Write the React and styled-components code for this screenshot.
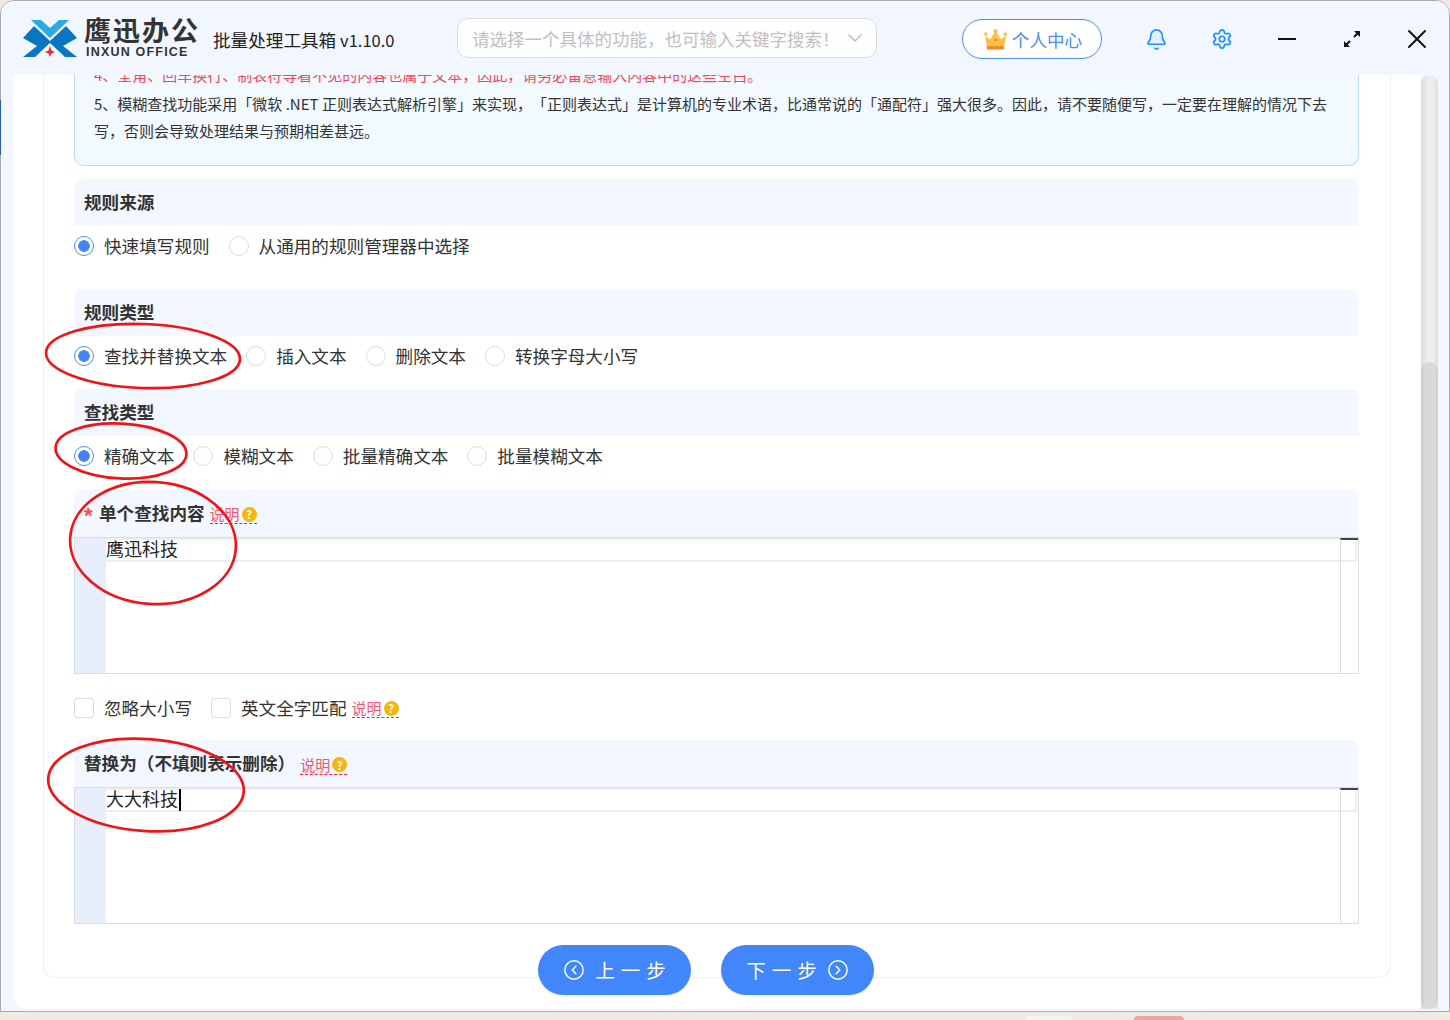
import styled, { createGlobalStyle } from "styled-components";
import { Bell, Settings, ChevronDown, X, CircleChevronLeft, CircleChevronRight } from "lucide-react";

const GlobalStyle = createGlobalStyle`
html, body {
  margin: 0;
  width: 1450px;
  height: 1020px;
  overflow: hidden;
  background: #efebe4;
}
body {
  font-family: "Noto Sans CJK SC", "Noto Sans", sans-serif;
  color: #333;
  text-spacing-trim: space-all;
}
* { box-sizing: border-box; }
`;

const App = () => {
  return (
    <>
      <GlobalStyle />
      <Page>
        <Window>
          <Header>
            <Brand>
              <Logo />
              <BrandText>
                <BrandName>鹰迅办公</BrandName>
                <BrandSub>INXUN OFFICE</BrandSub>
              </BrandText>
              <AppTitle>批量处理工具箱 <Version>v1.10.0</Version></AppTitle>
            </Brand>
            <Search>
              <span>请选择一个具体的功能，也可输入关键字搜索！</span>
              <ChevronDown size={24} color="#bdbdbd" strokeWidth={1.5} />
            </Search>
            <UserButton>
              <Crown />
              个人中心
            </UserButton>
            <IconCell>
              <Bell size={23} color="#1e90ff" fill="#e2f1ff" strokeWidth={1.7} />
            </IconCell>
            <IconCell>
              <Settings size={22} color="#1e90ff" strokeWidth={1.9} />
            </IconCell>
            <IconCell>
              <MinusBar />
            </IconCell>
            <IconCell>
              <ExpandIcon />
            </IconCell>
            <IconCell>
              <X size={32} color="#111" strokeWidth={1.4} />
            </IconCell>
          </Header>
          <Body>
            <Content>
              <Panel>
                <Notice>
                  <NoticeLine $red>4、全角、回车换行、制表符等看不见的内容也属于文本，因此，请务必留意输入内容中的这些空白。</NoticeLine>
                  <NoticeLine>5、模糊查找功能采用「微软 .NET 正则表达式解析引擎」来实现，「正则表达式」是计算机的专业术语，比通常说的「通配符」强大很多。因此，请不要随便写，一定要在理解的情况下去</NoticeLine>
                  <NoticeLine>写，否则会导致处理结果与预期相差甚远。</NoticeLine>
                </Notice>

                <SectionTitle>规则来源</SectionTitle>
                <OptionRow>
                  <Option label="快速填写规则" checked />
                  <Option label="从通用的规则管理器中选择" />
                </OptionRow>

                <SectionTitle $gap={23}>规则类型</SectionTitle>
                <OptionRow>
                  <Option label="查找并替换文本" checked />
                  <Option label="插入文本" />
                  <Option label="删除文本" />
                  <Option label="转换字母大小写" />
                </OptionRow>

                <SectionTitle>查找类型</SectionTitle>
                <OptionRow>
                  <Option label="精确文本" checked />
                  <Option label="模糊文本" />
                  <Option label="批量精确文本" />
                  <Option label="批量模糊文本" />
                </OptionRow>

                <SectionTitle $tall>
                  <Required>*</Required>
                  单个查找内容
                  <Help />
                </SectionTitle>
                <Editor text="鹰迅科技" />

                <CheckRow>
                  <CheckOption>
                    <CheckBox />
                    <LabelText>忽略大小写</LabelText>
                  </CheckOption>
                  <CheckOption>
                    <CheckBox />
                    <LabelText>英文全字匹配</LabelText>
                    <Help />
                  </CheckOption>
                </CheckRow>

                <SectionTitle>
                  替换为（不填则表示删除）
                  <Help />
                </SectionTitle>
                <Editor text="大大科技" caret />
              </Panel>
              <Footer>
                <StepButton>
                  <CircleChevronLeft size={22} strokeWidth={1.6} />
                  <StepText>上一步</StepText>
                </StepButton>
                <StepButton>
                  <StepText>下一步</StepText>
                  <CircleChevronRight size={22} strokeWidth={1.6} />
                </StepButton>
              </Footer>
            </Content>
            <ScrollTrack>
              <ScrollThumb />
            </ScrollTrack>
          </Body>
        </Window>
        <Taskbar>
          <TaskItem />
          <TaskItem $pink />
        </Taskbar>
        <EdgeSliver />
        <Marks viewBox="0 0 1450 1020">
          <ellipse cx="143" cy="356" rx="97" ry="32" transform="rotate(2 143 356)" />
          <ellipse cx="121" cy="451" rx="65.5" ry="27.5" transform="rotate(3 121 451)" />
          <ellipse cx="153" cy="543" rx="83" ry="61" transform="rotate(4 153 543)" />
          <ellipse cx="146" cy="785" rx="98" ry="46" transform="rotate(4 146 785)" />
        </Marks>
      </Page>
    </>
  );
};

const Logo = () => (
  <LogoSvg viewBox="24 18 54 40">
    <polygon fill="#0a76c2" points="24,37 35,25 52,41 36,56 24,56 38,45" />
    <polygon fill="#0a76c2" points="78,37 67,25 50,41 66,56 78,56 64,45" />
    <polygon fill="#29abe2" points="32,19 42,19 51,27 60,19 70,19 51,37" />
    <polygon fill="#e8262d" points="51,45 52.4,49.6 56,51 52.4,52.4 51,56 49.6,52.4 46,51 49.6,49.6" />
  </LogoSvg>
);

const Crown = () => (
  <svg width="23" height="21" viewBox="0 0 23 21">
    <path fill="#fbbf44" d="M1 6.5l5 4 5.500-8.500 5.500 8.500 5-4-1.800 10.500H2.800z" />
    <circle cx="1.800" cy="5" r="1.800" fill="#fbbf44" />
    <circle cx="11.500" cy="2" r="2" fill="#fbbf44" />
    <circle cx="21.200" cy="5" r="1.800" fill="#fbbf44" />
    <rect x="2.800" y="17" width="17.400" height="3.500" rx="0.800" fill="#f28a30" />
    <circle cx="11.500" cy="11" r="0.900" fill="#d9482b" />
  </svg>
);

const ExpandIcon = () => (
  <svg width="18" height="18" viewBox="0 0 18 18" fill="none" stroke="#111" strokeWidth="2">
    <path d="M11 7l4-4M3 15l4-4" />
    <path fill="#111" stroke="none" d="M11 1h6v6zM1 11v6h6z" />
  </svg>
);

const Option = ({ label, checked }) => (
  <OptionItem>
    <Radio $checked={checked} />
    <LabelText>{label}</LabelText>
  </OptionItem>
);

const Help = () => (
  <HelpLink>
    说明
    <HelpDot>?</HelpDot>
  </HelpLink>
);

const Editor = ({ text, caret }) => (
  <EditorBox>
    <Gutter />
    <Code>
      <CodeLine>
        <CodeText>{text}</CodeText>
        {caret && <Caret />}
      </CodeLine>
    </Code>
    <Side />
  </EditorBox>
);

const Page = styled.div`
position: relative;
width: 1450px;
height: 1020px;
overflow: hidden;
`;
const Window = styled.div`
width: 1450px;
height: 1012px;
display: flex;
flex-direction: column;
background: #f2f7ff;
border: 1px solid #a9abb0;
border-radius: 14px 14px 0 0;
overflow: hidden;
`;
const Header = styled.header`
flex: none;
height: 74px;
display: flex;
align-items: center;
padding-left: 22px;
background: #f2f7ff;
`;
const Brand = styled.div`
flex: none;
width: 434px;
display: flex;
align-items: center;
`;
const LogoSvg = styled.svg`
width: 54px;
height: 40px;
margin-top: 1px;
`;
const BrandText = styled.div`
display: flex;
flex-direction: column;
margin-left: 7px;
width: 129px;
`;
const BrandName = styled.div`
font-size: 27px;
font-weight: 700;
line-height: 26px;
color: #333;
letter-spacing: 2px;
`;
const BrandSub = styled.div`
font-family: "Liberation Sans", sans-serif;
font-size: 12.5px;
font-weight: 700;
line-height: 13px;
letter-spacing: 1.2px;
color: #333;
margin: 3px 0 0 2px;
`;
const AppTitle = styled.div`
font-size: 17.6px;
line-height: 24px;
color: #222;
white-space: nowrap;
margin-top: 4px;
`;
const Version = styled.span`
font-size: 16.5px;
`;
const Search = styled.div`
flex: none;
width: 420px;
height: 40px;
margin-right: 85px;
padding: 0 9px 0 14px;
display: flex;
align-items: center;
justify-content: space-between;
border: 1px solid #dcdcdc;
border-radius: 11px;
background: #fdfeff;
color: #c0c0c0;
font-size: 17.5px;
white-space: nowrap;
`;
const UserButton = styled.div`
flex: none;
width: 140px;
height: 40px;
margin-top: 2px;
margin-right: 22px;
padding-left: 2px;
display: flex;
align-items: center;
justify-content: center;
gap: 5px;
border: 1px solid #4a8df8;
border-radius: 20px;
background: #fff;
color: #4a8df8;
font-size: 17.6px;
`;
const IconCell = styled.div`
flex: none;
width: 65px;
height: 40px;
margin-top: 2px;
display: flex;
align-items: center;
justify-content: center;
`;
const MinusBar = styled.div`
width: 18px;
height: 2px;
background: #111;
`;
const Body = styled.div`
flex: 1;
min-height: 0;
display: flex;
padding: 0 10px 2px 12px;
`;
const Content = styled.main`
width: 1408px;
padding: 0 30px 14px;
display: flex;
flex-direction: column;
justify-content: flex-end;
overflow: hidden;
background: #fff;
border-radius: 0 0 0 14px;
`;
const Panel = styled.section`
flex: none;
padding: 0 31px 53px 30px;
border: 1px solid #efefef;
border-top: none;
border-radius: 0 0 12px 12px;
`;
const Notice = styled.div`
padding: 0 19px 21px;
margin-bottom: 13px;
background: #f2f9ff;
border: 1px solid #b9dcf7;
border-top: none;
border-radius: 0 0 10px 10px;
`;
const NoticeLine = styled.div`
font-size: 15px;
line-height: 27px;
white-space: nowrap;
margin-bottom: ${props => (props.$red ? 2 : 0)}px;
color: ${props => (props.$red ? "#f5475b" : "#333")};
`;
const SectionTitle = styled.div`
height: ${props => (props.$tall ? 48 : 47)}px;
margin-top: ${props => (props.$gap === undefined ? 0 : props.$gap)}px;
padding: 0 0 2px 10px;
display: flex;
align-items: center;
font-size: 17.6px;
font-weight: 700;
color: #333;
background: #f3f7ff;
border-radius: 8px 8px 0 0;
`;
const OptionRow = styled.div`
height: 40px;
margin-bottom: 13px;
display: flex;
align-items: center;
gap: 19px;
`;
const OptionItem = styled.label`
display: flex;
align-items: center;
gap: 10px;
font-size: 17.6px;
color: #333;
white-space: nowrap;
`;
const LabelText = styled.span`
padding-bottom: 2px;
`;
const CodeText = styled.span`
padding-bottom: 5px;
`;
const Radio = styled.span`
width: 20px;
height: 20px;
border-radius: 50%;
border: 1px solid ${props => (props.$checked ? "#4a8df8" : "#dcdcdc")};
background: ${props => (props.$checked ? "radial-gradient(circle, #4285f4 0 5.5px, #fff 6px)" : "#fff")};
`;
const Required = styled.span`
font-family: "Liberation Sans", sans-serif;
font-size: 22px;
line-height: 20px;
margin: 8px 5px 0 0;
width: 10px;
color: #f5475b;
font-weight: 700;
`;
const HelpLink = styled.span`
margin-left: 5px;
margin-top: 5px;
height: 19px;
display: inline-flex;
align-items: center;
gap: 2px;
font-size: 15px;
font-weight: 400;
line-height: 18px;
color: #f5566b;
border-bottom: 1px dashed #ff2030;
`;
const HelpDot = styled.span`
width: 15px;
height: 15px;
border-radius: 50%;
display: inline-flex;
align-items: center;
justify-content: center;
background: #f5b50a;
color: #fff;
font-size: 11px;
font-weight: 700;
`;
const EditorBox = styled.div`
height: 137px;
display: flex;
background: #fff;
border: 1px solid #dcdcdc;
`;
const Gutter = styled.div`
flex: none;
width: 31px;
background: #e8effc;
`;
const Code = styled.div`
flex: 1;
min-width: 0;
`;
const CodeLine = styled.div`
height: 24px;
margin-right: -17px;
display: flex;
align-items: center;
font-size: 18px;
color: #222;
border: 2px solid #eeeeee;
border-left: none;
`;
const Caret = styled.span`
width: 2px;
height: 22px;
background: #000;
margin-left: 1px;
`;
const Side = styled.div`
flex: none;
width: 18px;
border-left: 1px solid #dcdcdc;
border-top: 2px solid #444;
`;
const CheckRow = styled.div`
height: 32px;
margin: 18px 0 16px;
display: flex;
align-items: center;
gap: 19px;
`;
const CheckOption = styled.label`
display: flex;
align-items: center;
font-size: 17.6px;
color: #333;
white-space: nowrap;
${HelpLink} {
  margin-top: 1px;
}
`;
const CheckBox = styled.span`
width: 20px;
height: 20px;
margin-right: 10px;
border: 1px solid #dcdcdc;
border-radius: 3px;
background: #fff;
`;
const Footer = styled.div`
flex: none;
position: relative;
margin: -33px 0 0 495px;
display: flex;
gap: 30px;
`;
const StepButton = styled.button`
width: 153px;
height: 50px;
padding: 0;
display: flex;
align-items: center;
justify-content: center;
gap: 10px;
border: none;
border-radius: 25px;
background: #4287f9;
color: #fff;
font-family: inherit;
box-shadow: 0 1px 2px rgba(0, 0, 0, 0.08);
`;
const StepText = styled.span`
font-size: 19.5px;
letter-spacing: 6px;
margin-right: -6px;
padding-bottom: 2px;
`;
const ScrollTrack = styled.div`
flex: none;
width: 17px;
display: flex;
flex-direction: column;
justify-content: flex-end;
border-radius: 9px 9px 0 0;
background: linear-gradient(90deg, #dcdcdc, #ededed 40%, #ededed 70%, #dedede);
`;
const ScrollThumb = styled.div`
height: 647px;
border-radius: 9px;
background: linear-gradient(90deg, #c9c9c9, #d9d9d9 25%, #d9d9d9 80%, #cfcfcf);
`;
const Taskbar = styled.div`
height: 8px;
padding: 4px 0 0 1026px;
display: flex;
gap: 62px;
`;
const TaskItem = styled.div`
width: ${props => (props.$pink ? 50 : 46)}px;
height: 6px;
border-radius: 4px 4px 0 0;
background: ${props => (props.$pink ? "#e8a8a0" : "#f6f3ee")};
`;
const EdgeSliver = styled.div`
position: absolute;
left: 0;
top: 100px;
width: 1px;
height: 55px;
background: #2a5ea8;
`;
const Marks = styled.svg`
position: absolute;
left: 0;
top: 0;
width: 1450px;
height: 1020px;
pointer-events: none;
fill: none;
stroke: #f01414;
stroke-width: 2.7;
`;

export default App;
